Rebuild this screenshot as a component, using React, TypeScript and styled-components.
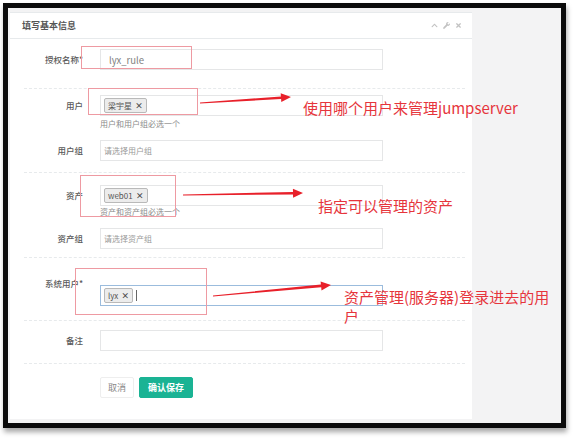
import styled, { createGlobalStyle } from "styled-components";
import { FaChevronUp, FaWrench, FaTimes } from "react-icons/fa";

const GlobalStyle = createGlobalStyle`
  html, body {
    margin: 0;
    padding: 0;
    background: #fff;
  }
  body {
    font-family: "Noto Sans CJK SC", "Noto Sans", sans-serif;
  }
`;

const Page = styled.div`
  position: relative;
  width: 574px;
  height: 439px;
  overflow: hidden;
`;

const Frame = styled.div`
  box-sizing: border-box;
  margin: 3px 0 0 3px;
  width: 563px;
  height: 425px;
  border: 5px solid #0b0b0b;
  background: #f3f3f4;
  box-shadow: 1px 4px 5px rgba(0, 0, 0, 0.35);
  padding: 4px 0 0 2px;
  display: flex;
  align-items: flex-start;
`;

const Panel = styled.div`
  width: 462px;
  height: 406px;
  background: #fff;
  border-top: 1px solid #e7eaec;
  display: flex;
  flex-direction: column;
`;

const PanelHeader = styled.div`
  height: 25px;
  border-bottom: 1px solid #e7eaec;
  padding: 0 10px 0 12px;
  display: flex;
  align-items: center;
  justify-content: space-between;
`;

const Title = styled.span`
  font-size: 9px;
  font-weight: 700;
  color: #555;
`;

const Tools = styled.div`
  display: flex;
  align-items: center;
  gap: 5px;
  color: #c2c2c2;
`;

const FormBody = styled.div`
  padding: 10px 7px 0 14px;
  display: flex;
  flex-direction: column;
`;

const FormGroup = styled.div<{ $mt?: number }>`
  display: flex;
  align-items: flex-start;
  margin-top: ${(p) => p.$mt ?? 0}px;
`;

const Label = styled.label<{ $shift?: number }>`
  width: 59px;
  height: 21px;
  line-height: 21px;
  margin-top: ${(p) => p.$shift ?? 0}px;
  text-align: right;
  font-size: 8.5px;
  font-weight: 500;
  color: #5a5a5a;
  white-space: nowrap;
`;

const Field = styled.div`
  margin-left: 17px;
  width: 283px;
  display: flex;
  flex-direction: column;
`;

const TextInput = styled.input`
  box-sizing: border-box;
  width: 100%;
  height: 21px;
  border: 1px solid #e5e6e7;
  outline: none;
  padding: 0 8px;
  font-family: inherit;
  font-size: 9.5px;
  color: #808080;
  background: #fff;
`;

const SelectBox = styled.div<{ $focus?: boolean }>`
  box-sizing: border-box;
  width: 100%;
  height: 21px;
  border: 1px solid ${(p) => (p.$focus ? "#9bbcdd" : "#e5e6e7")};
  padding: 0 3px;
  display: flex;
  align-items: center;
  gap: 3px;
  font-size: 8px;
  color: #999;
  background: #fff;
`;

const Tag = styled.span`
  box-sizing: border-box;
  height: 15px;
  line-height: 13px;
  padding: 0 3px;
  border: 1px solid #b9b9b9;
  border-radius: 2px;
  background: #ececec;
  font-size: 8px;
  color: #555;
  white-space: nowrap;
`;

const TagX = styled.b`
  margin-left: 3px;
  color: #444;
`;

const Caret = styled.span`
  width: 1px;
  height: 11px;
  background: #666;
`;

const Help = styled.div<{ $mt?: number }>`
  margin-top: ${(p) => p.$mt ?? 3}px;
  font-size: 8px;
  line-height: 10px;
  color: #8a8a8a;
`;

const Divider = styled.div<{ $mt: number }>`
  margin-top: ${(p) => p.$mt}px;
  border-top: 1px dashed #e7eaec;
`;

const ButtonRow = styled.div`
  margin: 13px 0 0 76px;
  display: flex;
  gap: 5px;
`;

const Button = styled.button<{ $primary?: boolean }>`
  height: 21px;
  padding: 0 ${(p) => (p.$primary ? 8 : 7)}px;
  border: 1px solid ${(p) => (p.$primary ? "#1ab394" : "#eeeeee")};
  border-radius: 2px;
  background: ${(p) => (p.$primary ? "#1ab394" : "#fff")};
  color: ${(p) => (p.$primary ? "#fff" : "#888")};
  font-family: inherit;
  font-size: 9px;
  font-weight: ${(p) => (p.$primary ? 700 : 400)};
`;

const Overlay = styled.div`
  position: absolute;
  inset: 0;
  pointer-events: none;
`;

const RedBox = styled.div<{ $x: number; $y: number; $w: number; $h: number }>`
  position: absolute;
  left: ${(p) => p.$x}px;
  top: ${(p) => p.$y}px;
  width: ${(p) => p.$w}px;
  height: ${(p) => p.$h}px;
  box-sizing: border-box;
  border: 1px solid #ee9aa2;
`;

const Note = styled.div<{ $x: number; $y: number; $w?: number }>`
  position: absolute;
  left: ${(p) => p.$x}px;
  top: ${(p) => p.$y}px;
  width: ${(p) => (p.$w ? `${p.$w}px` : "auto")};
  white-space: ${(p) => (p.$w ? "normal" : "nowrap")};
  font-size: 15px;
  line-height: 19px;
  color: #e6353c;
`;

const ArrowLayer = styled.svg`
  position: absolute;
  left: 0;
  top: 0;
`;

type ArrowProps = { x1: number; y1: number; x2: number; y2: number };

function Arrow({ x1, y1, x2, y2 }: ArrowProps) {
  const dx = x2 - x1;
  const dy = y2 - y1;
  const len = Math.hypot(dx, dy);
  const ux = dx / len;
  const uy = dy / len;
  const nx = -uy;
  const ny = ux;
  const bx = x2 - ux * 10;
  const by = y2 - uy * 10;
  const pt = (x: number, y: number) => `${x.toFixed(1)},${y.toFixed(1)}`;
  const points = [
    pt(x1 + nx * 0.5, y1 + ny * 0.5),
    pt(bx + nx * 1.3, by + ny * 1.3),
    pt(bx + nx * 4.5, by + ny * 4.5),
    pt(x2, y2),
    pt(bx - nx * 4.5, by - ny * 4.5),
    pt(bx - nx * 1.3, by - ny * 1.3),
    pt(x1 - nx * 0.5, y1 - ny * 0.5),
  ].join(" ");
  return <polygon points={points} fill="#e8202a" />;
}

export default function App() {
  return (
    <Page>
      <GlobalStyle />
      <Frame>
        <Panel>
          <PanelHeader>
            <Title>填写基本信息</Title>
            <Tools>
              <FaChevronUp size={7} />
              <FaWrench size={7} />
              <FaTimes size={7} />
            </Tools>
          </PanelHeader>
          <FormBody>
            <FormGroup>
              <Label>授权名称*</Label>
              <Field>
                <TextInput defaultValue="lyx_rule" readOnly />
              </Field>
            </FormGroup>
            <Divider $mt={18} />
            <FormGroup $mt={6}>
              <Label>用户</Label>
              <Field>
                <SelectBox>
                  <Tag>
                    梁宇星<TagX>×</TagX>
                  </Tag>
                </SelectBox>
                <Help>用户和用户组必选一个</Help>
              </Field>
            </FormGroup>
            <FormGroup $mt={11}>
              <Label>用户组</Label>
              <Field>
                <SelectBox>请选择用户组</SelectBox>
              </Field>
            </FormGroup>
            <Divider $mt={11} />
            <FormGroup $mt={12}>
              <Label>资产</Label>
              <Field>
                <SelectBox>
                  <Tag>
                    web01<TagX>×</TagX>
                  </Tag>
                </SelectBox>
                <Help $mt={1}>资产和资产组必选一个</Help>
              </Field>
            </FormGroup>
            <FormGroup $mt={11}>
              <Label>资产组</Label>
              <Field>
                <SelectBox>请选择资产组</SelectBox>
              </Field>
            </FormGroup>
            <Divider $mt={8} />
            <FormGroup $mt={27}>
              <Label $shift={-12}>系统用户*</Label>
              <Field>
                <SelectBox $focus>
                  <Tag>
                    lyx<TagX>×</TagX>
                  </Tag>
                  <Caret />
                </SelectBox>
              </Field>
            </FormGroup>
            <Divider $mt={14} />
            <FormGroup $mt={9}>
              <Label>备注</Label>
              <Field>
                <TextInput readOnly />
              </Field>
            </FormGroup>
            <Divider $mt={12} />
            <ButtonRow>
              <Button>取消</Button>
              <Button $primary>确认保存</Button>
            </ButtonRow>
          </FormBody>
        </Panel>
      </Frame>
      <Overlay>
        <RedBox $x={81} $y={46} $w={111} $h={23} />
        <RedBox $x={88} $y={88} $w={110} $h={27} />
        <RedBox $x={80} $y={175} $w={96} $h={42} />
        <RedBox $x={75} $y={268} $w={132} $h={47} />
        <ArrowLayer width={574} height={439}>
          <Arrow x1={200} y1={103} x2={291} y2={97} />
          <Arrow x1={183} y1={195} x2={303} y2={193} />
          <Arrow x1={213} y1={296} x2={331} y2={285} />
        </ArrowLayer>
        <Note $x={303} $y={98}>使用哪个用户来管理jumpserver</Note>
        <Note $x={318} $y={196}>指定可以管理的资产</Note>
        <Note $x={344} $y={287} $w={208}>
          资产管理(服务器)登录进去的用户
        </Note>
      </Overlay>
    </Page>
  );
}
